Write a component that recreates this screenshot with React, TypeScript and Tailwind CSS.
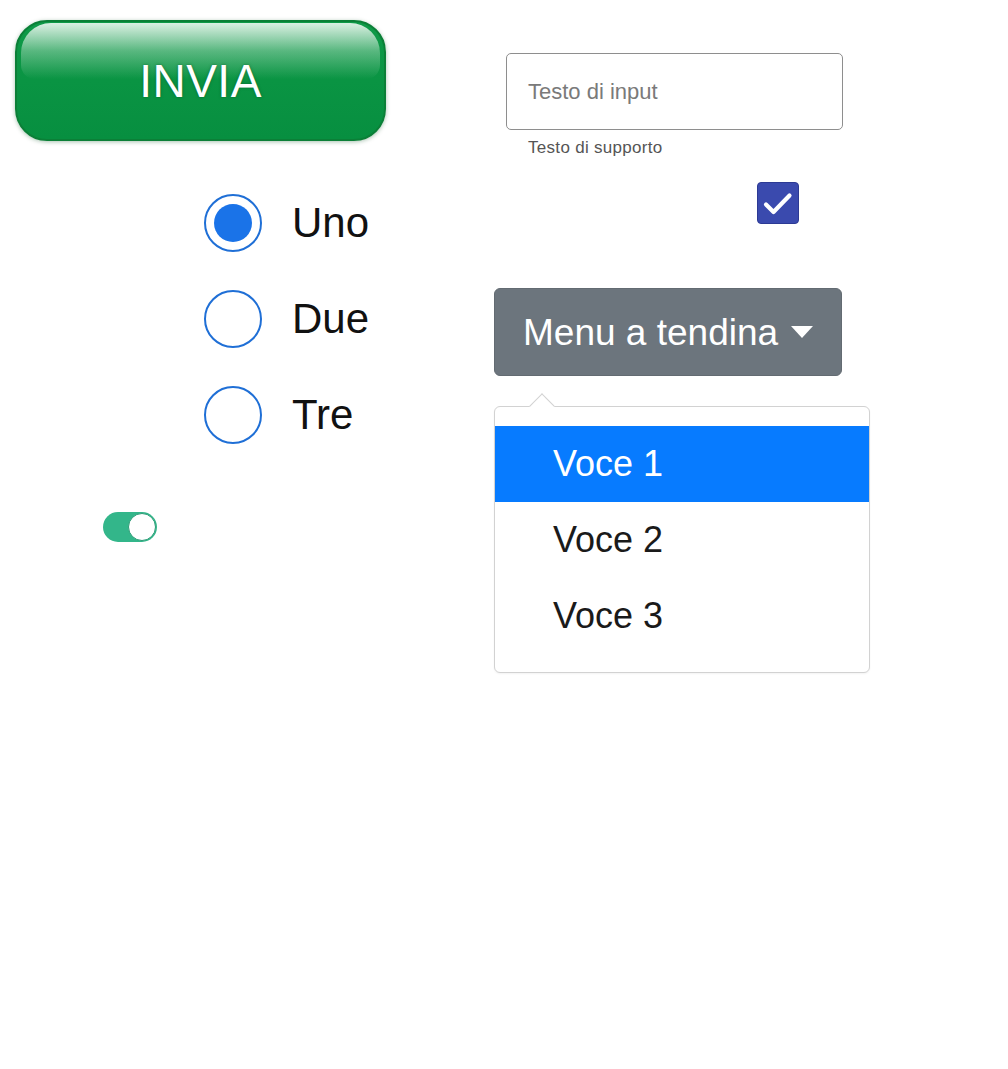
import { useState } from "react";

const radios = ["Uno", "Due", "Tre"];
const items = ["Voce 1", "Voce 2", "Voce 3"];

export default function App() {
  const [choice, setChoice] = useState("Uno");
  const [checked, setChecked] = useState(true);
  const [on, setOn] = useState(true);

  return (
    <main
      className="w-[1008px] h-[1069px] bg-white flex text-[#1a1a1a]"
      style={{ fontFamily: '"Liberation Sans", Arial, sans-serif' }}
    >
      {/* left column */}
      <div className="w-[494px] flex flex-col">
        <button className="relative ml-[15px] mt-[20px] w-[371px] h-[121px] rounded-[32px] border-2 border-[#0b7f37] bg-gradient-to-b from-[#0e9a48] via-[#0a9443] to-[#078f40] shadow-[0_1px_4px_rgba(0,80,30,0.35)] overflow-hidden">
          {/* gloss highlight */}
          <span className="absolute left-[4px] right-[4px] top-[1px] h-[56px] rounded-t-[30px] rounded-b-[14px] bg-gradient-to-b from-[#ffffff]/85 via-[#e6f3ea]/35 to-transparent" />
          <span className="relative text-white text-[46px] leading-none tracking-[0.5px] [text-shadow:0_0_3px_rgba(0,60,20,0.5)]">
            INVIA
          </span>
        </button>

        <div className="ml-[204px] mt-[53px] flex flex-col gap-[38px]">
          {radios.map((r) => (
            <label key={r} className="flex items-center gap-[30px] cursor-pointer" onClick={() => setChoice(r)}>
              <span className="w-[58px] h-[58px] rounded-full border-2 border-[#1f6fd6] flex items-center justify-center bg-white">
                {choice === r && <span className="w-[38px] h-[38px] rounded-full bg-[#1a73e8]" />}
              </span>
              <span className="text-[42px] leading-none text-[#111]">{r}</span>
            </label>
          ))}
        </div>

        <button
          onClick={() => setOn(!on)}
          className={`ml-[103px] mt-[68px] w-[54px] h-[30px] rounded-full flex items-center p-[1px] ${
            on ? "bg-[#33b68a] justify-end" : "bg-gray-300 justify-start"
          }`}
        >
          <span className="w-[28px] h-[28px] rounded-full bg-white border border-[#2b9c76]" />
        </button>
      </div>

      {/* right column */}
      <div className="flex flex-col">
        <div className="ml-[12px] mt-[53px] w-[337px] h-[77px] rounded-[5px] border border-[#8e8e8e] flex items-center px-[21px]">
          <span className="text-[22px] text-[#7a7a7a]">Testo di input</span>
        </div>
        <div className="ml-[34px] mt-[8px] text-[17px] tracking-[0.3px] text-[#555] leading-[20px]">Testo di supporto</div>

        <button
          onClick={() => setChecked(!checked)}
          className="ml-[263px] mt-[24px] w-[42px] h-[42px] rounded-[4px] bg-[#3a4aae] border border-[#2c3a94] flex items-center justify-center"
        >
          {checked && (
            <svg width="42" height="42" viewBox="0 0 42 42" fill="none" className="shrink-0">
              <path d="M9 22.5l7.5 7.5L32.5 13.5" stroke="white" strokeWidth="4.2" strokeLinecap="round" strokeLinejoin="round" />
            </svg>
          )}
        </button>

        <button className="mt-[64px] w-[348px] h-[88px] rounded-[6px] bg-[#6c757d] border border-[#636b72] flex items-center pl-[28px] gap-[13px]">
          <span className="text-white text-[37px] leading-none">Menu a tendina</span>
          <svg width="22" height="12" viewBox="0 0 22 12">
            <path d="M0 0h22L11 12z" fill="white" />
          </svg>
        </button>

        <div className="relative mt-[30px] w-[376px] h-[267px] rounded-[6px] border border-[#d2d2d2] bg-white pt-[19px] shadow-[0_1px_2px_rgba(0,0,0,0.05)]">
          <span className="absolute left-[38px] top-[-10px] w-[18px] h-[18px] rotate-45 bg-white border-l border-t border-[#d2d2d2]" />
          {items.map((it, i) => (
            <div
              key={it}
              className={`h-[76px] flex items-center pl-[58px] text-[36px] leading-none ${
                i === 0 ? "bg-[#077bff] text-white" : "text-[#1a1a1a]"
              }`}
            >
              {it}
            </div>
          ))}
        </div>
      </div>
    </main>
  );
}
